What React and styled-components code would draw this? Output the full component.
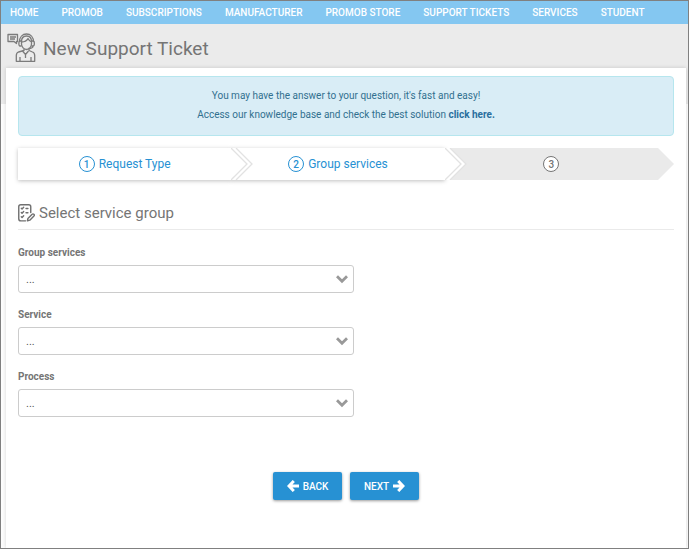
import { useState } from "react";
import styled, { createGlobalStyle } from "styled-components";

const menu = ["Home", "Promob", "Subscriptions", "Manufacturer", "Promob Store", "Support Tickets", "Services", "Student"];

const steps = [
    { label: "Request Type", done: true },
    { label: "Group services", done: true },
    { label: "", done: false },
];

const fields = [
    { id: "group", label: "Group services" },
    { id: "service", label: "Service" },
    { id: "process", label: "Process" },
];

function App() {

    const [values, setValues] = useState({});

    const handleChange = (e) => {
        setValues({ ...values, [e.target.id]: e.target.value });
    }

    return (
        <Page>
            <GlobalStyle />
            <Nav>
                {menu.map((item) => (
                    <NavLink href="#" key={item}>{item}</NavLink>
                ))}
            </Nav>
            <Header>
                <AgentIcon />
                <Title>New Support Ticket</Title>
            </Header>
            <Card>
                <Alert>
                    <p>You may have the answer to your question, it's fast and easy!</p>
                    <p>Access our knowledge base and check the best solution <a href="#">click here.</a></p>
                </Alert>
                <Steps>
                    {steps.map((step, i) => (
                        <Step key={i} $done={step.done} $level={steps.length - i}>
                            <StepNumber>{i + 1}</StepNumber>
                            {step.label}
                            <StepArrow done={step.done} />
                        </Step>
                    ))}
                </Steps>
                <Section>
                    <ChecklistIcon />
                    <h2>Select service group</h2>
                </Section>
                <form onSubmit={(e) => e.preventDefault()}>
                    {fields.map((field) => (
                        <Field key={field.id}>
                            <Label htmlFor={field.id}>{field.label}</Label>
                            <SelectBox>
                                <Select id={field.id} value={values[field.id] || ""} onChange={handleChange}>
                                    <option value="">...</option>
                                </Select>
                                <ChevronIcon />
                            </SelectBox>
                        </Field>
                    ))}
                    <Actions>
                        <Button type="button"><ArrowIcon left />Back</Button>
                        <Button type="submit">Next<ArrowIcon /></Button>
                    </Actions>
                </form>
            </Card>
        </Page>
    )
}

function StepArrow({ done }) {
    return (
        <Arrow width="22" height="32" viewBox="0 0 22 32" fill="none" aria-hidden="true">
            {done ? (
                <>
                    <path d="M0 0H5L21 16L5 32H0Z" fill="#fff" />
                    <path d="M0 0L16 16L0 32M5 0L21 16L5 32" stroke="#e2e2e2" strokeWidth="1.3" />
                </>
            ) : (
                <path d="M0 0L16 16L0 32Z" fill="#eaeaea" />
            )}
        </Arrow>
    )
}

function AgentIcon() {
    return (
        <svg width="30" height="30" viewBox="0 0 30 30" fill="none" stroke="#7c7c7c" strokeWidth="1.3" strokeLinejoin="round" aria-hidden="true">
            <path d="M1 1.500H10.500V8.500H9.500V10.500L7 8.500H1Z" />
            <path d="M3 4H9M3 6H8" />
            <path d="M12.500 9C12.500 4 15.500 1 19.500 1S26.500 4 26.500 9" />
            <path d="M14.500 8.500C14.500 5 16.500 3 19.500 3S24.500 5 24.500 8.500V11C24.500 14 22 16.500 19.500 16.500S14.500 14 14.500 11Z" />
            <path d="M14.500 9C18 9 20 7.500 21 5.500C22 7.500 23 8.500 24.500 9" />
            <path d="M14.500 8H13C11.500 8 11.500 13 13 13H14.500M24.500 8H26C27.800 8 27.800 13 26 13H24.500M26 13C26 15 24 15.500 21.500 15.500" />
            <path d="M17 16V17.500L11.500 19C10 19.500 9.300 21 9.300 22.500V28.300H27.700V22.500C27.700 21 27 19.500 25.500 19L22 17.500V16" />
            <path d="M15.500 18L18.500 21.500L21.500 18M18.500 21.500V25M13 28V24M24 28V24" />
        </svg>
    )
}

function ChecklistIcon() {
    return (
        <svg width="17" height="18" viewBox="0 0 18 19" fill="none" stroke="#707070" strokeWidth="1.500" strokeLinecap="round" strokeLinejoin="round" aria-hidden="true">
            <path d="M13.500 9V3C13.500 1.500 12.700 0.800 11.400 0.800H3C1.500 0.800 0.800 1.500 0.800 3V15.500C0.800 17 1.500 17.800 3 17.800H8" />
            <path d="M3.500 4.500L4.300 5.300L6 3.500M3.500 9L4.300 9.800L6 8M3.500 13.500L4.300 14.300L6 12.500M8.500 4.800H10.500M8.500 9.200H10.500" />
            <path d="M10 17.800L10.500 15.300L15 10.800C16.200 9.800 17.900 11.300 16.900 12.600L12.500 17.100Z" />
        </svg>
    )
}

function ChevronIcon() {
    return (
        <svg width="12" height="9" viewBox="0 0 12 9" fill="none" stroke="#999" strokeWidth="2.800" aria-hidden="true">
            <path d="M1 1.200L6 6.200L11 1.200" />
        </svg>
    )
}

function ArrowIcon({ left }) {
    return (
        <svg width="12" height="12" viewBox="0 0 12 12" fill="none" stroke="#fff" strokeWidth="3" aria-hidden="true">
            <path d={left ? "M6.800 1L2 6L6.800 11M2.500 6H12" : "M5.200 1L10 6L5.200 11M9.500 6H0"} />
        </svg>
    )
}

const GlobalStyle = createGlobalStyle`
  *{
      box-sizing: border-box;
  }
  body{
      margin: 0;
      background: #fdfdfd;
      font-family: Roboto, "Liberation Sans", sans-serif;
      color: #757575;
  }
  p, h1, h2{
      margin: 0;
  }
`
const Page = styled.div`
  display: flex;
  flex-direction: column;
  min-height: 100vh;
  border: 1px solid #808080;
`
const Nav = styled.nav`
  display: flex;
  gap: 23px;
  height: 23px;
  padding: 0 9px;
  align-items: center;
  background: #84c7f1;
`
const NavLink = styled.a`
  color: white;
  font-size: 10px;
  font-weight: 500;
  line-height: 20px;
  text-transform: uppercase;
  text-decoration: none;
  white-space: nowrap;
`
const Header = styled.header`
  display: flex;
  align-items: flex-start;
  gap: 6px;
  height: 80px;
  padding: 9px 6px;
  background: #ebebeb;
`
const Title = styled.h1`
  font-size: 19px;
  font-weight: 400;
  line-height: 32px;
`
const Card = styled.main`
  flex: 1;
  margin: -36px 2px 0 5px;
  padding: 8px 12px;
  background: white;
  box-shadow: 0 0 4px rgba(0, 0, 0, 0.16);
  clip-path: inset(-4px -4px 0 -4px);
`
const Alert = styled.div`
  padding: 9px 10px 11px;
  border: 1px solid #b6e6ee;
  border-radius: 4px;
  background: #d9edf6;
  color: #31708f;
  font-size: 10px;
  line-height: 19px;
  text-align: center;
  a{
      color: #2a6f9e;
      font-weight: 700;
      text-decoration: none;
  }
`
const Steps = styled.div`
  display: flex;
  margin-top: 12px;
  padding-right: 16px;
`
const Step = styled.div`
  position: relative;
  display: flex;
  flex: 1;
  align-items: center;
  justify-content: center;
  gap: 4px;
  height: 32px;
  font-size: 12px;
  color: ${(props) => props.$done ? "#2791d3" : "#757575"};
  background: ${(props) => props.$done ? "white" : "#eaeaea"};
  box-shadow: ${(props) => props.$done ? "0 1px 4px rgba(0, 0, 0, 0.25)" : "none"};
  z-index: ${(props) => props.$level};
`
const StepNumber = styled.span`
  display: flex;
  align-items: center;
  justify-content: center;
  width: 16px;
  height: 16px;
  border: 1px solid currentColor;
  border-radius: 50%;
  background: white;
  font-size: 10px;
  font-weight: 500;
`
const Arrow = styled.svg`
  position: absolute;
  top: 0;
  left: 100%;
`
const Section = styled.div`
  display: flex;
  align-items: center;
  gap: 4px;
  margin: 19px 0 17px;
  padding-bottom: 2px;
  border-bottom: 1px solid #eaeaea;
  h2{
      font-size: 15px;
      font-weight: 400;
      line-height: 28px;
  }
`
const Field = styled.div`
  display: flex;
  flex-direction: column;
  gap: 6px;
  width: 50%;
  min-width: 336px;
  margin-bottom: 16px;
`
const Label = styled.label`
  font-size: 10px;
  font-weight: 700;
  line-height: 12px;
`
const SelectBox = styled.div`
  position: relative;
  svg{
      position: absolute;
      top: 10px;
      right: 6px;
      pointer-events: none;
  }
`
const Select = styled.select`
  display: block;
  width: 100%;
  height: 28px;
  padding: 0 7px;
  border: 1px solid #ccc;
  border-radius: 3px;
  appearance: none;
  background: white;
  color: #555;
  font-family: inherit;
  font-size: 11px;
`
const Actions = styled.div`
  display: flex;
  justify-content: center;
  gap: 8px;
  margin-top: 55px;
`
const Button = styled.button`
  display: flex;
  align-items: center;
  justify-content: center;
  gap: 4px;
  min-width: 69px;
  height: 28px;
  padding: 0 12px;
  border: none;
  border-radius: 2px;
  background: #2791d3;
  box-shadow: 0 1px 3px rgba(0, 0, 0, 0.4);
  color: white;
  font-family: inherit;
  font-size: 10px;
  font-weight: 500;
  text-transform: uppercase;
`

export default App;
